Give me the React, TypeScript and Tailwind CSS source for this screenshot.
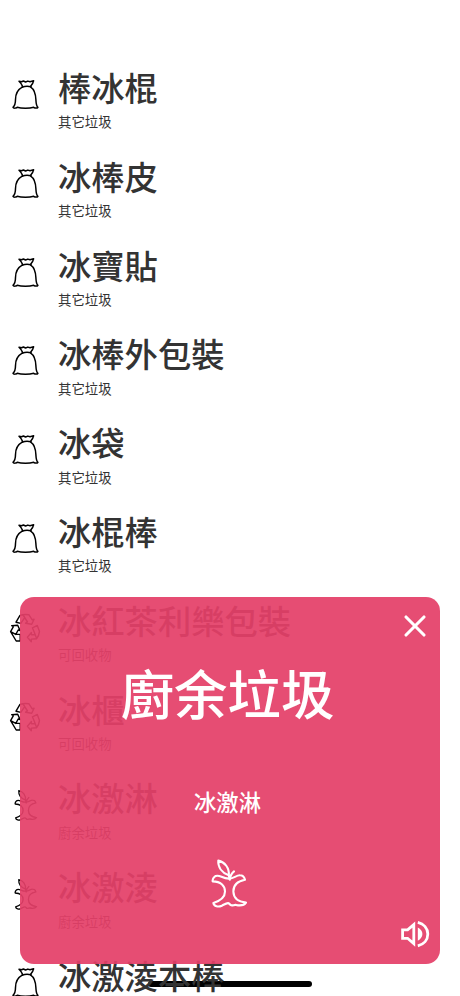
import { X } from "lucide-react";

type Kind = "other" | "recycle" | "kitchen";

const labels: Record<Kind, string> = {
  other: "其它垃圾",
  recycle: "可回收物",
  kitchen: "廚余垃圾",
};

const items: { name: string; kind: Kind }[] = [
  { name: "棒冰棍", kind: "other" },
  { name: "冰棒皮", kind: "other" },
  { name: "冰寶貼", kind: "other" },
  { name: "冰棒外包裝", kind: "other" },
  { name: "冰袋", kind: "other" },
  { name: "冰棍棒", kind: "other" },
  { name: "冰紅茶利樂包裝", kind: "recycle" },
  { name: "冰櫃", kind: "recycle" },
  { name: "冰激淋", kind: "kitchen" },
  { name: "冰激淩", kind: "kitchen" },
  { name: "冰激淩本棒", kind: "other" },
];

function BagIcon() {
  return (
    <svg className="size-8" viewBox="0 0 32 32" fill="none" stroke="currentColor" strokeWidth="1.5" strokeLinecap="round" strokeLinejoin="round">
      <path d="M13.6 7.4C12.8 5.4 11.6 3.6 10 2.2l2.6.5 1.8-.7 2.2 1 2.2-.9 2.2.7 3.6-1c-.4 2-1.4 3.6-3 5.4" />
      <path d="M13.2 8.2c2.8-1.1 5.8-1.2 8.8-.4" />
      <path d="M13.2 8.2C8.6 10.7 6.6 15 6.5 20.5c0 3.8-.5 6-2.5 7.8.4 1.2 2.8 1 4.2 0 4.2 1.4 12.3 1.4 16.5 0 1.4 1 3.6 1.1 4.2 0-1.8-1.6-1.8-4-2-7.6-.3-6.4-1.8-10.5-5.2-12.6" />
    </svg>
  );
}

function RecycleIcon() {
  return (
    <svg className="size-8" viewBox="0 0 32 32" fill="none" stroke="currentColor" strokeWidth="1.4" strokeLinecap="round" strokeLinejoin="round">
      <path d="M7 10.2 11 3.4c3-1 6-1 9-.6l3.2 5 1.9-.5-2.4 4.9-6.2-1 2-1.2-4.2-6.6M7 10.2l4.8 1.2 3.4-5" />
      <path d="m1.6 19.6 2.8-4.9-1.7-1 6-.4 2.4 5.3-1.9-.6-2.4 4.4h4.4v6.6H7.2zM1.6 19.6l5.2 2.8" />
      <path d="m23.4 15.8 4.9-2.3 2.2 5.9c-.3 2.7-1.2 5.1-2.8 7.3l-5.4.4v2.6l-3.9-4.4 4-4.8v2.2h3.8l-.6-1.7zM27.7 26.7l-1.5-4" />
    </svg>
  );
}

function AppleIcon({ className }: { className: string }) {
  return (
    <svg className={className} viewBox="0 0 40 50" fill="none" stroke="currentColor" strokeWidth="2.1" strokeLinecap="round" strokeLinejoin="round">
      <path d="M20.8 17.4C13.8 14.6 9.8 9 10.3 2.6c6.6 1.4 11.2 7.4 10.5 14.8ZM20.8 17.4l1 4.4c.2-3.4 1.6-6.2 4.2-8.4" />
      <path d="M21.5 20.6c-3.2.2-5.5-.7-8-1.8-2.9-1.3-5.5-1.5-7 0-1.5 1.4-2.2 2.8-1.8 4.6C12.6 23.4 17 27.6 17 33.6c0 5.6-3.8 9-11.6 11.4.6 3.4 4.8 4.4 8.4 2.7 2.4-1.2 4.3-2.6 6.2-2.6 1.4 0 1.5 1.6 3.2 2.2 1.7.5 2.9-.7 4.8-.4 3.6.8 8 .6 10-2.3-7.8-.8-12.4-4.8-12.6-10.8-.2-6.2 3.9-10.6 11.6-12-.7-2.8-2.5-4.5-5-4.5-3.8-.1-6.1 3.1-10.5 3.3Z" />
    </svg>
  );
}

function SpeakerIcon() {
  return (
    <svg className="size-8" viewBox="0 0 32 32" fill="none" stroke="currentColor" strokeWidth="2.8">
      <path d="M3.6 11.9v8.4h5l6.2 5.3V6.6l-6.2 5.3z" />
      <path d="M18.8 4.3c6 1.4 10 6 10 11.8s-4 10.4-10 11.8" />
      <path d="M18.8 9.5c2.8 1.4 4.6 3.7 4.6 6.6s-1.8 5.2-4.6 6.6z" fill="currentColor" stroke="none" />
    </svg>
  );
}

function KindIcon({ kind }: { kind: Kind }) {
  if (kind === "recycle") return <RecycleIcon />;
  if (kind === "kitchen") return <AppleIcon className="size-8" />;
  return <BagIcon />;
}

export default function App() {
  return (
    <main className="relative h-[996px] w-[460px] overflow-hidden bg-white font-['Noto_Sans_CJK_TC','Noto_Sans_CJK_SC',sans-serif]">
      <div className="absolute bottom-[9px] left-[148px] h-[6px] w-[164px] rounded-full bg-black" />

      <ul className="relative flex flex-col pt-[61px]">
        {items.map((item) => (
          <li key={item.name} className="flex h-[88.8px] shrink-0 pl-[9px]">
            <div className="mt-[18px] w-[49px] shrink-0 text-black">
              <KindIcon kind={item.kind} />
            </div>
            <div className="whitespace-nowrap text-[#333]">
              <h2 className="h-[50.4px] text-[33.3px] leading-[51px] font-medium">{item.name}</h2>
              <p className="text-[13.4px] leading-5">{labels[item.kind]}</p>
            </div>
          </li>
        ))}
      </ul>

      {/* Result card over the list */}
      <section className="absolute top-[597px] left-5 flex h-[367px] w-[420px] flex-col items-center rounded-[14px] bg-[#e43f68]/93 text-white">
        <button className="absolute top-[11px] right-[7px]" aria-label="Close">
          <X size={36} strokeWidth={2.1} />
        </button>
        <h1 className="mt-[55px] mr-[5px] text-[53.4px] leading-[80px] font-medium">{labels.kitchen}</h1>
        <p className="mt-[53px] mr-[5px] text-[22.3px] leading-8 font-medium">冰激淋</p>
        <AppleIcon className="mt-[41px] mr-[4px] h-[50px] w-10" />
        <button className="absolute right-[9px] bottom-[14px]" aria-label="Speak">
          <SpeakerIcon />
        </button>
      </section>
    </main>
  );
}
